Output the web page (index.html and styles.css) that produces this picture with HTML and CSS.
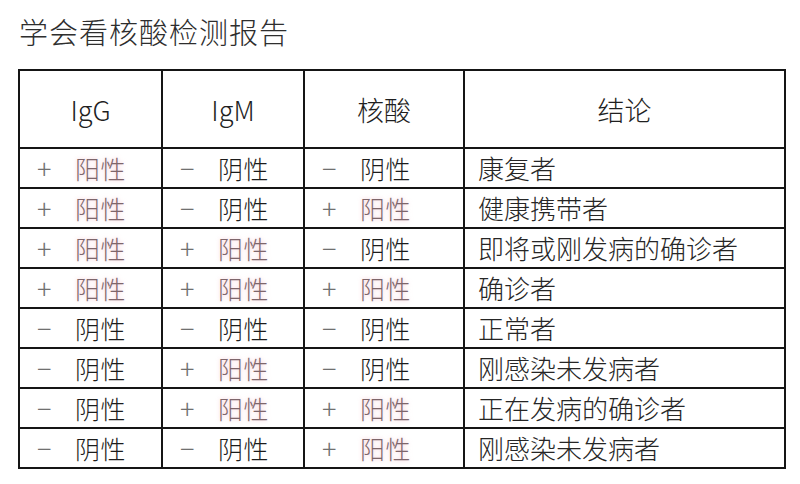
FILE: index.html
```html
<!DOCTYPE html>
<html lang="zh">
<head>
<meta charset="utf-8">
<title>学会看核酸检测报告</title>
<link rel="stylesheet" href="styles.css">
</head>
<body>
<div class="page">
  <h1 class="title">学会看核酸检测报告</h1>
  <table class="report">
    <colgroup>
      <col class="c1"><col class="c2"><col class="c3"><col class="c4">
    </colgroup>
    <thead>
      <tr><th>IgG</th><th>IgM</th><th>核酸</th><th>结论</th></tr>
    </thead>
    <tbody>
      <tr>
        <td><span class="sign">+</span><span class="pos">阳性</span></td>
        <td><span class="sign">−</span><span class="neg">阴性</span></td>
        <td><span class="sign">−</span><span class="neg">阴性</span></td>
        <td class="res">康复者</td>
      </tr>
      <tr>
        <td><span class="sign">+</span><span class="pos">阳性</span></td>
        <td><span class="sign">−</span><span class="neg">阴性</span></td>
        <td><span class="sign">+</span><span class="pos">阳性</span></td>
        <td class="res">健康携带者</td>
      </tr>
      <tr>
        <td><span class="sign">+</span><span class="pos">阳性</span></td>
        <td><span class="sign">+</span><span class="pos">阳性</span></td>
        <td><span class="sign">−</span><span class="neg">阴性</span></td>
        <td class="res">即将或刚发病的确诊者</td>
      </tr>
      <tr>
        <td><span class="sign">+</span><span class="pos">阳性</span></td>
        <td><span class="sign">+</span><span class="pos">阳性</span></td>
        <td><span class="sign">+</span><span class="pos">阳性</span></td>
        <td class="res">确诊者</td>
      </tr>
      <tr>
        <td><span class="sign">−</span><span class="neg">阴性</span></td>
        <td><span class="sign">−</span><span class="neg">阴性</span></td>
        <td><span class="sign">−</span><span class="neg">阴性</span></td>
        <td class="res">正常者</td>
      </tr>
      <tr>
        <td><span class="sign">−</span><span class="neg">阴性</span></td>
        <td><span class="sign">+</span><span class="pos">阳性</span></td>
        <td><span class="sign">−</span><span class="neg">阴性</span></td>
        <td class="res">刚感染未发病者</td>
      </tr>
      <tr>
        <td><span class="sign">−</span><span class="neg">阴性</span></td>
        <td><span class="sign">+</span><span class="pos">阳性</span></td>
        <td><span class="sign">+</span><span class="pos">阳性</span></td>
        <td class="res">正在发病的确诊者</td>
      </tr>
      <tr>
        <td><span class="sign">−</span><span class="neg">阴性</span></td>
        <td><span class="sign">−</span><span class="neg">阴性</span></td>
        <td><span class="sign">+</span><span class="pos">阳性</span></td>
        <td class="res">刚感染未发病者</td>
      </tr>
    </tbody>
  </table>
</div>
</body>
</html>
```
FILE: styles.css
```css
html, body {
  margin: 0;
  padding: 0;
  background: #ffffff;
}

body {
  font-family: "Noto Sans CJK SC", "Noto Sans", "Liberation Sans", sans-serif;
  font-weight: 300;
  color: #1a1a1a;
}

.page {
  width: 800px;
  height: 484px;
  padding: 13px 0 0 18px;
  box-sizing: border-box;
}

.title {
  margin: 0 0 0 1px;
  height: 56px;
  font-size: 29px;
  line-height: 36px;
  font-weight: 300;
  color: #2e2e2e;
  letter-spacing: 1px;
}

.report {
  border-collapse: collapse;
  table-layout: fixed;
  width: 766px;
}

.c1 { width: 143px; }
.c2 { width: 142px; }
.c3 { width: 160px; }
.c4 { width: 321px; }

.report th,
.report td {
  border: 2px solid #151515;
  padding: 0;
  vertical-align: middle;
}

.report th {
  height: 76px;
  font-size: 27px;
  font-weight: 300;
  text-align: center;
  color: #1f1f1f;
}

.report td {
  height: 38px;
  font-size: 25px;
  line-height: 30px;
  padding-left: 17px;
  white-space: nowrap;
}

.report td.res {
  padding-left: 13px;
  color: #262626;
  font-size: 26px;
}

.sign {
  display: inline-block;
  width: 38px;
  font-size: 27px;
  font-weight: 300;
  color: #707070;
}

.neg {
  color: #1c1c1c;
  letter-spacing: 0.5px;
}

.pos {
  color: #7e666b;
  letter-spacing: 0.5px;
  text-shadow: 0 0 4px rgba(240, 160, 180, 0.6);
}
```
